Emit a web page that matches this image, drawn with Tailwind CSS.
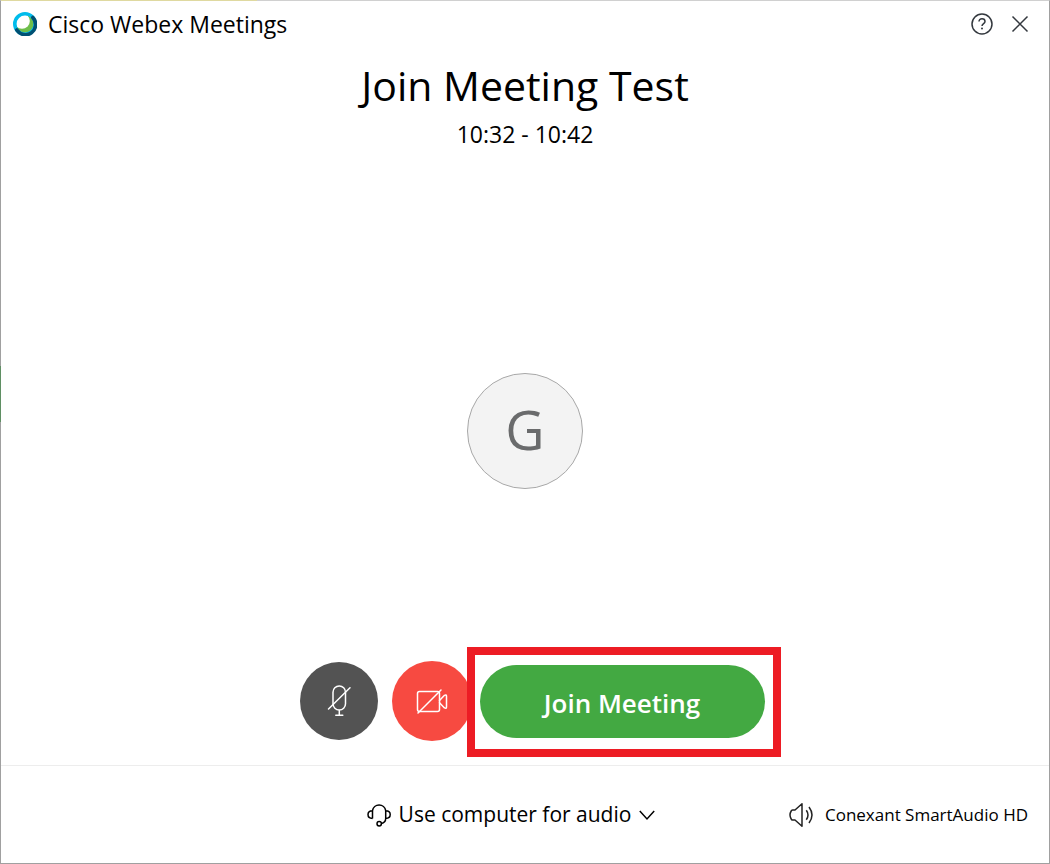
<!DOCTYPE html>
<html lang="en">
<head>
  <meta charset="UTF-8" />
  <meta name="viewport" content="width=device-width, initial-scale=1.0"/>
  <title>Cisco Webex Meetings</title>
  <script src="https://cdn.jsdelivr.net/npm/@tailwindcss/browser@4"></script>
</head>
<body class="bg-white text-black font-['Segoe_UI','Open_Sans',sans-serif]">

<div class="relative flex flex-col h-screen border border-[#a0a0a0] border-t-[#d0d0d0]">
  <!-- Desktop showing at the window edge -->
  <div class="absolute -top-px left-0 w-64 h-px bg-[#dfd9a0]"></div>
  <div class="absolute top-[365px] -left-px w-px h-14 bg-[#5f8f63]"></div>

  <!-- Title Bar -->
  <header class="flex items-center justify-between h-[46px] pl-3 pr-[18px]">
    <div class="flex items-center gap-[11px]">
      <svg class="w-6 h-6" viewBox="0 0 24 24" fill="none">
        <circle cx="12" cy="12" r="9" fill="#6ebe4a"/>
        <circle cx="9" cy="9" r="7.8" fill="#fff"/>
        <circle cx="12" cy="12" r="10.2" stroke="#00bceb" stroke-width="3.6"/>
        <path d="M19.8 5.5A10.2 10.2 0 1 1 3.8 18" stroke="#005073" stroke-width="3.6" stroke-linecap="round"/>
      </svg>
      <span class="text-[23px]">Cisco Webex Meetings</span>
    </div>
    <div class="flex items-center gap-4 text-[#33383e]">
      <button aria-label="Help">
        <svg class="w-[22px] h-[22px]" viewBox="0 0 22 22" fill="none" stroke="currentColor" stroke-width="1.5">
          <circle cx="11" cy="11" r="10"/>
          <path d="M8 8.6C8 6.9 9.2 5.8 11 5.8s3 1.1 3 2.7c0 2.1-3 2.3-3 4.6"/>
          <circle cx="11" cy="15.6" r="1" fill="currentColor" stroke="none"/>
        </svg>
      </button>
      <button aria-label="Close">
        <svg class="w-[22px] h-[22px]" viewBox="0 0 22 22" fill="none" stroke="currentColor" stroke-width="1.5">
          <path d="M3.5 3.5l15 15M18.5 3.5l-15 15"/>
        </svg>
      </button>
    </div>
  </header>

  <!-- Meeting Details -->
  <main class="relative flex-1 flex flex-col items-center justify-between pt-2 pb-6">
    <div class="text-center">
      <h1 class="text-[41px] leading-[60px]">Join Meeting Test</h1>
      <p class="text-[23px] leading-[38px]">10:32 - 10:42</p>
    </div>

    <div class="flex items-center justify-center size-[116px] mt-12 pb-1 rounded-full border border-[#a8a8a8] bg-[#f3f3f3] text-[#6a6b6c] text-[54px]">G</div>

    <!-- Call Controls -->
    <div class="flex items-center pl-[14px]">
      <button aria-label="Unmute" class="flex items-center justify-center size-[78px] mr-[14px] rounded-full bg-[#535353] text-white">
        <svg class="w-8 h-8" viewBox="0 0 32 32" fill="none" stroke="currentColor" stroke-width="1.5" stroke-linecap="round">
          <rect x="10" y="1" width="12.5" height="24" rx="6.2"/>
          <path d="M16.3 25.5v4.5M12.8 30.3h7M5.5 24L27 2.8"/>
        </svg>
      </button>
      <button aria-label="Start video" class="flex items-center justify-center size-20 mr-2 rounded-full bg-[#f74a41] text-white">
        <svg class="w-8 h-8" viewBox="0 0 32 32" fill="none" stroke="currentColor" stroke-width="1.5" stroke-linecap="round" stroke-linejoin="round">
          <rect x="1.5" y="6.5" width="22" height="20" rx="2"/>
          <path d="M23.5 15.5l5-5.2q2-1 2 .8v11q0 1.8-2 .8l-5-5.2M2 28L25 5"/>
        </svg>
      </button>
      <div class="relative">
        <button class="w-[285px] h-[73px] pt-1 rounded-full bg-[#43a942] text-white text-[26px] font-semibold">Join Meeting</button>
        <div class="absolute -top-[18px] -bottom-[19px] -left-[13px] -right-4 border-8 border-[#ed1c24] pointer-events-none"></div>
      </div>
    </div>
  </main>

  <!-- Audio Bar -->
  <footer class="relative flex items-center justify-center h-[98px] pr-7 border-t border-[#ededed]">
    <button class="flex items-center gap-2 text-[21px]">
      <svg class="w-6 h-6" viewBox="0 0 24 24" fill="none" stroke="currentColor" stroke-width="1.5">
        <path d="M5.5 15.5v-8a6.7 6.7 0 0 1 13.2 0v8M5.5 7.8C2.8 7.8 1 9.4 1 11.6s1.8 3.9 4.5 3.9M18.7 7.8c2.7 0 4.5 1.6 4.5 3.8s-1.8 3.9-4.5 3.9c0 2.6-1.2 4.3-4.5 5"/>
        <circle cx="12.2" cy="20.7" r="2.2"/>
      </svg>
      <span>Use computer for audio</span>
      <svg class="w-4 h-4" viewBox="0 0 16 16" fill="none" stroke="currentColor" stroke-width="1.5">
        <path d="M.8 4L8 12l7.2-8"/>
      </svg>
    </button>
    <div class="absolute inset-y-0 right-[21px] flex items-center gap-3 text-[17px]">
      <svg class="w-6 h-6" viewBox="0 0 24 24" fill="none" stroke="#222" stroke-width="1.5" stroke-linejoin="round">
        <path d="M13 .8v22.4L6 17H3.5Q2.5 17 2.2 16Q-.2 12 2.2 8Q2.5 7 3.500 7H6Z"/>
        <path d="M17.3 7.3q3.4 4.7 0 9.4M20 4q6 8 0 16"/>
      </svg>
      <span>Conexant SmartAudio HD</span>
    </div>
  </footer>
</div>

</body>
</html>
